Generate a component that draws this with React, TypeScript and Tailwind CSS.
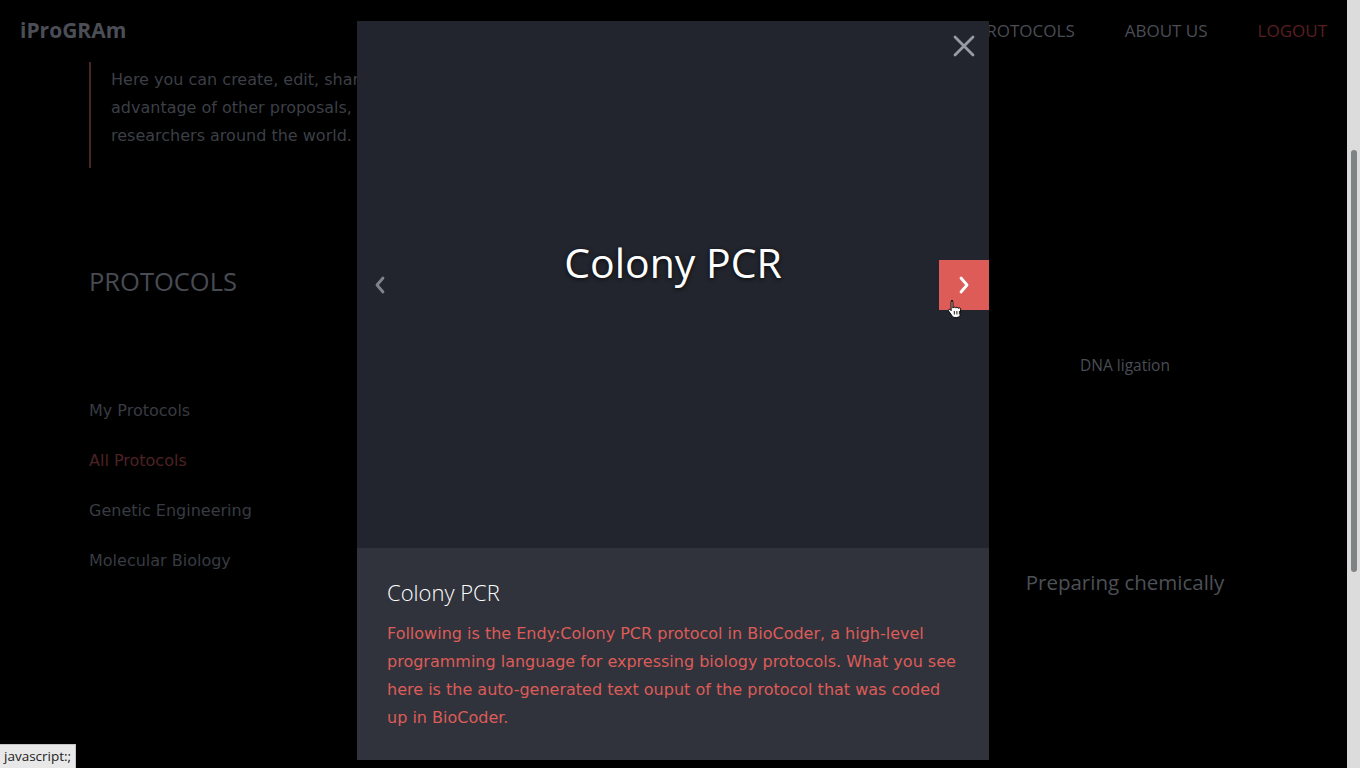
import React from 'react';

const sidebar = [
  { label: 'My Protocols', active: false },
  { label: 'All Protocols', active: true },
  { label: 'Genetic Engineering', active: false },
  { label: 'Molecular Biology', active: false },
];

const cards = [
  'Gel electrophoresis',
  'Plasmid miniprep',
  'DNA ligation',
  'Colony PCR',
  'Restriction digest',
  'Preparing chemically',
];

function CloseIcon() {
  return (
    <svg width="22" height="22" viewBox="0 0 22 22" fill="none">
      <path d="M2 2L20 20M20 2L2 20" stroke="#989ba1" strokeWidth="2.8" strokeLinecap="round" />
    </svg>
  );
}

function Chevron({ dir, color }: { dir: 'left' | 'right'; color: string }) {
  return (
    <svg width="10" height="18" viewBox="0 0 10 18" fill="none">
      <path
        d={dir === 'left' ? 'M8 2L2 9L8 16' : 'M2 2L8 9L2 16'}
        stroke={color}
        strokeWidth="2.8"
        strokeLinecap="round"
        strokeLinejoin="round"
      />
    </svg>
  );
}

function HandCursor() {
  return (
    <svg width="16" height="20" viewBox="0 0 16 20">
      <path
        d="M4.5 1.5c.8 0 1.4.6 1.4 1.4v6.2c.2-.7.8-1 1.4-1 .7 0 1.2.4 1.3 1 .2-.5.7-.8 1.3-.8.7 0 1.2.5 1.3 1.1.2-.4.7-.6 1.1-.6.8 0 1.300.6 1.3 1.4v4.3c0 2.4-1.7 4-4.1 4H8.1c-1.4 0-2.3-.6-3-1.6L1.6 12c-.4-.6-.2-1.3.4-1.6.6-.3 1.2-.1 1.6.4l.5.8V2.9c0-.8.6-1.4 1.4-1.4z"
        fill="#fff"
        stroke="#000"
        strokeWidth="1"
      />
      <path d="M7.3 12v3.5M9.9 12v3.5M12.4 12v3.5" stroke="#000" strokeWidth="0.9" />
    </svg>
  );
}

export default function App() {
  return (
    <div className="flex h-screen w-full overflow-hidden bg-black">
      <div className="relative flex-1 min-w-0">
        {/* page behind the modal */}
        <header className="flex h-[62px] items-center justify-between px-5">
          <span className="text-[21px] font-bold text-[#4b4e56] [font-family:'Open_Sans',sans-serif]">iProGRAm</span>
          <nav className="flex gap-[50px] text-[17px] text-[#4a4d55] [font-family:'Open_Sans',sans-serif]">
            <span>HOME</span>
            <span>PROTOCOLS</span>
            <span>ABOUT US</span>
            <span className="text-[#5a1e21]">LOGOUT</span>
          </nav>
        </header>

        <blockquote className="ml-[89px] border-l-2 border-[#4d2426] pb-[18px] pl-5 pt-[4px] text-[16px] leading-[28px] text-[#3c3f46] [font-family:'DejaVu_Sans',sans-serif]">
          Here you can create, edit, share and run protocols, taking
          <br />
          advantage of other proposals, made by the community of
          <br />
          researchers around the world.
        </blockquote>

        <section className="mt-[96px] flex pl-[89px]">
          <aside className="w-[361px] shrink-0">
            <h2 className="text-[25.5px] leading-[34px] text-[#484b53] [font-family:'Open_Sans',sans-serif]">PROTOCOLS</h2>
            <ul className="mt-[102px] flex flex-col gap-[28px] text-[16px] leading-[22px] [font-family:'DejaVu_Sans',sans-serif]">
              {sidebar.map(item => (
                <li key={item.label} className={item.active ? 'text-[#4c2224]' : 'text-[#383b42]'}>
                  {item.label}
                </li>
              ))}
            </ul>
          </aside>
          <div className="grid w-[810px] grid-cols-3 text-center text-[#4a4d54] [font-family:'Open_Sans',sans-serif]">
            {cards.map((title, i) => (
              <div key={title} className="flex h-[216px] flex-col items-center">
                <div className="h-[90px] w-full" />
                {i < 3 ? (
                  <span className="-mt-[1px] text-[15.5px] leading-[24px]">{title}</span>
                ) : (
                  <span className="-mt-[2px] text-[20.5px] leading-[28px] text-[#4d5056]">{title}</span>
                )}
              </div>
            ))}
          </div>
        </section>

        {/* modal */}
        <div className="absolute inset-0 flex justify-center pr-[1px] pt-[21px]">
          <div className="flex h-[739px] w-[632px] flex-col">
            <div className="relative flex h-[527px] flex-col items-center bg-[#22252d]">
              <button className="absolute right-[10px] top-[10px] p-1">
                <CloseIcon />
              </button>
              <h1 className="mt-[213px] text-[41px] leading-[56px] text-white [font-family:'Open_Sans',sans-serif] [text-shadow:0_1px_4px_rgba(0,0,0,0.8)]">
                Colony PCR
              </h1>
              <button className="absolute left-[18px] top-[255px] flex h-[18px] items-center">
                <Chevron dir="left" color="#80848a" />
              </button>
              <button className="absolute right-0 top-[239px] flex h-[50px] w-[50px] items-center justify-center bg-[#dd5c58]">
                <Chevron dir="right" color="#ffffff" />
              </button>
              <div className="absolute right-[26px] top-[278px]">
                <HandCursor />
              </div>
            </div>
            <div className="flex-1 bg-[#30333b] px-[30px] pt-[29px]">
              <h3 className="text-[22px] font-light leading-[30px] text-white [font-family:'Open_Sans',sans-serif]">Colony PCR</h3>
              <p className="mt-[13px] text-[16px] leading-[28px] text-[#dd5c58] [font-family:'DejaVu_Sans',sans-serif]">
                Following is the Endy:Colony PCR protocol in BioCoder, a high-level programming language for expressing biology protocols. What you see here is the auto-generated text ouput of the protocol that was coded up in BioCoder.
              </p>
            </div>
          </div>
        </div>

        {/* status bar */}
        <div className="absolute bottom-0 left-0 border-r border-t border-[#c4c4c4] bg-[#e8e8e8] px-[4px] text-[13.5px] leading-[23px] text-[#222] [font-family:'Open_Sans',sans-serif]">
          javascript:;
        </div>
      </div>

      {/* scrollbar */}
      <div className="flex w-[13px] shrink-0 justify-center bg-[#dcdcdc] pt-[150px]">
        <div className="h-[422px] w-[6px] rounded-full bg-[#7f8383]" />
      </div>
    </div>
  );
}
